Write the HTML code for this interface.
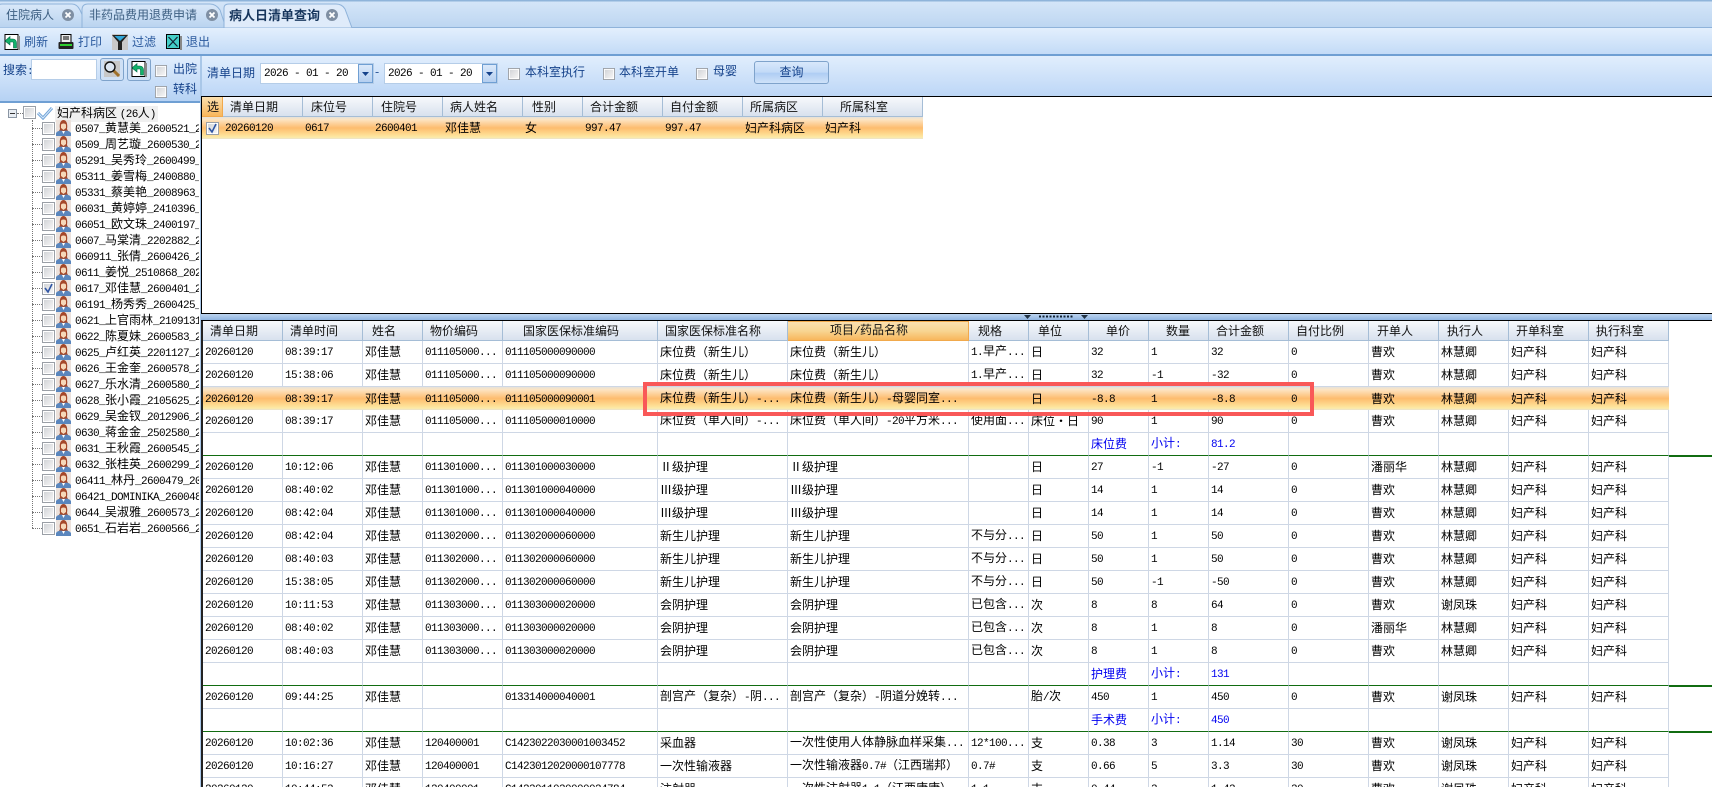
<!DOCTYPE html>
<html lang="zh-CN"><head><meta charset="utf-8"><title>病人日清单查询</title>
<style>
html,body{margin:0;padding:0;width:1712px;height:787px;overflow:hidden;background:#fff}
body{position:relative;font:12px/14px "WenQuanYi Zen Hei","Noto Sans CJK SC",sans-serif;color:#000}
i,.m,td.m{font:normal 11px/14px "Liberation Mono",monospace;letter-spacing:-.6px}
.a{position:absolute;white-space:nowrap}
.t{position:absolute;white-space:nowrap;line-height:14px}
.blue{color:#2b5a9e}.navy{color:#15428b}
table{position:absolute;border-collapse:separate;border-spacing:0;table-layout:fixed}
th,td{box-sizing:border-box;overflow:hidden;white-space:nowrap;padding:0 0 0 2px;font-weight:normal;text-align:left;border-right:1px solid #ced7e5;border-bottom:1px solid #ced7e5}
th{height:20px;background:linear-gradient(#f7f9fc,#e9eef5 45%,#d8e1ee);border-right:1px solid #a5bdd6;border-bottom:1px solid #a5bdd6;color:#111}
td{height:23px}
td.m{padding-top:2px}
#main td:nth-child(1),#main td:nth-child(2),#main td:nth-child(4),#main td:nth-child(5),#main td:nth-child(10),#main td:nth-child(11),#main td:nth-child(12),#main td:nth-child(13){font:normal 11px/14px "Liberation Mono",monospace;letter-spacing:-.6px;padding-top:2px}
#main tr.b td{font:12px/14px "WenQuanYi Zen Hei","Noto Sans CJK SC",sans-serif;letter-spacing:0;padding-top:0;color:#0000f0}
#main tr.b i{color:#0000f0}
th.on{background:linear-gradient(#fae0b0,#f8d592 50%,#f8b65c);border:1px solid #f1a94c;border-left:0}
tr.g td{border-bottom:1px solid #116c11}
tr.s td{border-right:0;border-bottom:0;background:linear-gradient(#e6e2da 0,#fde4c2 12%,#fdbc6e 50%,#fed488 72%,#fdeaa6 92%,#e9e3cf 100%)}
#top td{height:22px}
.row{position:absolute;left:0;width:199px;height:16px;overflow:hidden}
.row svg{position:absolute}
.row span{position:absolute;left:75px;top:1px;white-space:nowrap}
.dv{position:absolute;left:32px;width:0;border-left:1px dotted #777}
.dh{position:absolute;left:32px;top:8px;width:10px;height:0;border-top:1px dotted #777}
</style></head><body>
<svg width="0" height="0" style="position:absolute"><defs>
<linearGradient id="cg" x1="0" y1="0" x2="1" y2="1"><stop offset="0" stop-color="#d2d4d8"/><stop offset="1" stop-color="#f6f6f6"/></linearGradient>
<symbol id="cb" viewBox="0 0 13 13"><rect x=".5" y=".5" width="12" height="12" fill="#fff" stroke="#9a9fa6"/><rect x="2" y="2" width="9" height="9" fill="url(#cg)"/></symbol>
<symbol id="u" viewBox="0 0 15 16"><rect x="0" y="0" width="15" height="12" fill="#ece2dc"/><path d="M4 9C3 3 5 0 7.500 0S12 3 11 9L12 11H3Z" fill="#a5482a"/><path d="M5 5C5 3 10 3 10 5V8L7.500 10 5 8Z" fill="#f6d7b8"/><path d="M0 16V13C1 11 5 10 7.500 11 10 10 14 11 15 13V16Z" fill="#5a86bd"/><path d="M6 11H9L7.500 14Z" fill="#fff"/></symbol>
<symbol id="x" viewBox="0 0 12 12"><circle cx="6" cy="6" r="6" fill="#7f8fa3"/><path d="M3.500 3.500 8.500 8.500M8.500 3.500 3.500 8.500" stroke="#fff" stroke-width="1.800"/></symbol>
<symbol id="rf" viewBox="0 0 16 16"><rect x="1" y="0.500" width="13" height="15" fill="#fff" stroke="#000"/><rect x="14" y="2" width="2" height="14" fill="#888"/><path d="M1 7 6 2.500V5H9C11.500 5 12.500 7 12.500 9V14H9.500V9C9.500 8.300 9 8 8.500 8H6V11Z" fill="#12b26a" stroke="#064" stroke-width=".6"/></symbol>
</defs></svg>

<!-- tab strip -->
<div class="a" style="left:0;top:0;width:1712px;height:28px;background:linear-gradient(#8fb4da 0,#8fb4da 1px,#d4e5f8 2px,#bdd6f1 100%);border-bottom:1px solid #8fb3da;box-sizing:border-box"></div>
<svg class="a" style="left:0;top:0" width="370" height="29">
<path d="M-2 28V8Q-2 4 2 4H72Q77 4 80 10L88 28Z" fill="url(#tb)" stroke="#8fb3da"/>
<path d="M82 28 82 10Q82 4 88 4H210Q216 4 220 10L226 28Z" fill="url(#tb)" stroke="#8fb3da"/>
<path d="M224 28V8Q224 4 229 4H336Q342 4 345 9L352 28Z" fill="#dfebfa" stroke="#8fb3da"/>
<defs><linearGradient id="tb" x1="0" x2="0" y1="0" y2="1"><stop offset="0" stop-color="#d9e8f9"/><stop offset="1" stop-color="#b9d3ef"/></linearGradient></defs>
<use href="#x" x="62" y="9" width="12" height="12"/><use href="#x" x="206" y="9" width="12" height="12"/><use href="#x" x="326" y="9" width="12" height="12"/>
</svg>
<div class="t" style="left:6px;top:8px;color:#3d5f82">住院病人</div>
<div class="t" style="left:89px;top:8px;color:#3d5f82">非药品费用退费申请</div>
<div class="t" style="left:229px;top:8px;font-weight:bold;font-size:13px;color:#17365d">病人日清单查询</div>

<!-- toolbar -->
<div class="a" style="left:0;top:28px;width:1712px;height:28px;background:linear-gradient(#e3effd,#c3dbf7);border-bottom:2px solid #6f9fd3;box-sizing:border-box"></div>
<svg class="a" style="left:4px;top:34px" width="16" height="16"><use href="#rf" width="16" height="16"/></svg>
<div class="t blue" style="left:24px;top:35px">刷新</div>
<svg class="a" style="left:58px;top:34px" width="16" height="16"><rect x="3" y="0.500" width="10" height="8" fill="#eee" stroke="#000"/><path d="M5 3H11M5 5H11" stroke="#000"/><rect x="0.500" y="8" width="15" height="7" rx="1" fill="#222"/><rect x="2" y="10" width="12" height="2" fill="#2fcf2f"/></svg>
<div class="t blue" style="left:78px;top:35px">打印</div>
<svg class="a" style="left:112px;top:34px" width="16" height="16"><rect width="16" height="16" fill="#c8c8c8"/><path d="M0 1H16L10 8V16H6V8Z" fill="#222"/><path d="M2.500 2H13.500L8 7Z" fill="#2fa6d8"/></svg>
<div class="t blue" style="left:132px;top:35px">过滤</div>
<svg class="a" style="left:166px;top:34px" width="16" height="16"><rect x="0.500" y="0.500" width="13" height="14" fill="#44cfc8" stroke="#000"/><path d="M2.500 3 11.500 12.500M11.500 3 2.500 12.500" stroke="#123" stroke-width="1.200"/><rect x="14" y="2" width="2" height="14" fill="#888"/></svg>
<div class="t blue" style="left:186px;top:35px">退出</div>

<!-- left search panel -->
<div class="a" style="left:0;top:56px;width:200px;height:47px;background:linear-gradient(#e1eefd,#b6d2f4);border-bottom:2px solid #6f9fd3;box-sizing:border-box"></div>
<div class="t navy" style="left:3px;top:63px">搜索<i>:</i></div>
<div class="a" style="left:31px;top:59px;width:66px;height:21px;background:#fff;border:1px solid #b5cde8;box-sizing:border-box"></div>
<div class="a" style="left:100px;top:58px;width:24px;height:23px;border:1px solid #7fa3cb;border-radius:3px;background:#cfe0f5;box-sizing:border-box"></div>
<svg class="a" style="left:104px;top:61px" width="16" height="17"><rect width="16" height="16" fill="#c8c8c8"/><path d="M9.500 9.500 15 15" stroke="#a0702a" stroke-width="3"/><circle cx="6" cy="6" r="5" fill="#dce6f2" stroke="#111" stroke-width="1.400"/></svg>
<div class="a" style="left:127px;top:58px;width:24px;height:23px;border:1px solid #7fa3cb;border-radius:3px;background:#cfe0f5;box-sizing:border-box"></div>
<svg class="a" style="left:131px;top:61px" width="16" height="16"><use href="#rf" width="16" height="16"/></svg>
<svg class="a" style="left:155px;top:65px" width="12" height="12"><use href="#cb" width="12" height="12"/></svg>
<div class="t navy" style="left:173px;top:62px">出院</div>
<svg class="a" style="left:155px;top:86px" width="12" height="12"><use href="#cb" width="12" height="12"/></svg>
<div class="t navy" style="left:173px;top:82px">转科</div>

<!-- tree -->
<div class="a" style="left:0;top:103px;width:200px;height:684px;overflow:hidden;background:#fff">
<div class="a" style="left:8px;top:6px;width:9px;height:9px;background:#e8edf3;border:1px solid #8a95a3;box-sizing:border-box"></div>
<div class="a" style="left:10px;top:10px;width:5px;height:1px;background:#333"></div>
<div class="a" style="left:17px;top:10px;width:6px;border-top:1px dotted #777"></div>
<svg class="a" style="left:23px;top:3px" width="13" height="13"><use href="#cb" width="13" height="13"/></svg>
<svg class="a" style="left:37px;top:3px" width="16" height="14"><path d="M1 7 6 12 15 2" fill="none" stroke="#6fa3d8" stroke-width="3"/><path d="M1 7 6 12 15 2" fill="none" stroke="#d9e8f8" stroke-width="1"/></svg>
<div class="t" style="left:55px;top:3px;background:#f0f0f0;padding:0 2px">妇产科病区 <i>(26</i>人<i>)</i></div>
<div class="dv" style="top:17px;height:408px"></div>
<div class="row" style="top:17px"><s class="dh"></s><svg style="left:42px;top:2px" width="13" height="13"><use href="#cb" width="13" height="13"/></svg><svg style="left:56px;top:0" width="15" height="16"><use href="#u" width="15" height="16"/></svg><span><i>0507_</i>黄慧美<i>_2600521_2026</i></span></div>
<div class="row" style="top:33px"><s class="dh"></s><svg style="left:42px;top:2px" width="13" height="13"><use href="#cb" width="13" height="13"/></svg><svg style="left:56px;top:0" width="15" height="16"><use href="#u" width="15" height="16"/></svg><span><i>0509_</i>周艺璇<i>_2600530_2026</i></span></div>
<div class="row" style="top:49px"><s class="dh"></s><svg style="left:42px;top:2px" width="13" height="13"><use href="#cb" width="13" height="13"/></svg><svg style="left:56px;top:0" width="15" height="16"><use href="#u" width="15" height="16"/></svg><span><i>05291_</i>吴秀玲<i>_2600499_2026</i></span></div>
<div class="row" style="top:65px"><s class="dh"></s><svg style="left:42px;top:2px" width="13" height="13"><use href="#cb" width="13" height="13"/></svg><svg style="left:56px;top:0" width="15" height="16"><use href="#u" width="15" height="16"/></svg><span><i>05311_</i>姜雪梅<i>_2400880_2026</i></span></div>
<div class="row" style="top:81px"><s class="dh"></s><svg style="left:42px;top:2px" width="13" height="13"><use href="#cb" width="13" height="13"/></svg><svg style="left:56px;top:0" width="15" height="16"><use href="#u" width="15" height="16"/></svg><span><i>05331_</i>蔡美艳<i>_2008963_2026</i></span></div>
<div class="row" style="top:97px"><s class="dh"></s><svg style="left:42px;top:2px" width="13" height="13"><use href="#cb" width="13" height="13"/></svg><svg style="left:56px;top:0" width="15" height="16"><use href="#u" width="15" height="16"/></svg><span><i>06031_</i>黄婷婷<i>_2410396_2026</i></span></div>
<div class="row" style="top:113px"><s class="dh"></s><svg style="left:42px;top:2px" width="13" height="13"><use href="#cb" width="13" height="13"/></svg><svg style="left:56px;top:0" width="15" height="16"><use href="#u" width="15" height="16"/></svg><span><i>06051_</i>欧文珠<i>_2400197_2026</i></span></div>
<div class="row" style="top:129px"><s class="dh"></s><svg style="left:42px;top:2px" width="13" height="13"><use href="#cb" width="13" height="13"/></svg><svg style="left:56px;top:0" width="15" height="16"><use href="#u" width="15" height="16"/></svg><span><i>0607_</i>马棠清<i>_2202882_2026</i></span></div>
<div class="row" style="top:145px"><s class="dh"></s><svg style="left:42px;top:2px" width="13" height="13"><use href="#cb" width="13" height="13"/></svg><svg style="left:56px;top:0" width="15" height="16"><use href="#u" width="15" height="16"/></svg><span><i>060911_</i>张倩<i>_2600426_2026</i></span></div>
<div class="row" style="top:161px"><s class="dh"></s><svg style="left:42px;top:2px" width="13" height="13"><use href="#cb" width="13" height="13"/></svg><svg style="left:56px;top:0" width="15" height="16"><use href="#u" width="15" height="16"/></svg><span><i>0611_</i>姜悦<i>_2510868_2026</i></span></div>
<div class="row" style="top:177px"><s class="dh"></s><svg style="left:42px;top:2px" width="13" height="13"><use href="#cb" width="13" height="13"/><path d="M3 6 6 10 10 2" fill="none" stroke="#2f55a4" stroke-width="1.600"/></svg><svg style="left:56px;top:0" width="15" height="16"><use href="#u" width="15" height="16"/></svg><span><i>0617_</i>邓佳慧<i>_2600401_2026</i></span></div>
<div class="row" style="top:193px"><s class="dh"></s><svg style="left:42px;top:2px" width="13" height="13"><use href="#cb" width="13" height="13"/></svg><svg style="left:56px;top:0" width="15" height="16"><use href="#u" width="15" height="16"/></svg><span><i>06191_</i>杨秀秀<i>_2600425_2026</i></span></div>
<div class="row" style="top:209px"><s class="dh"></s><svg style="left:42px;top:2px" width="13" height="13"><use href="#cb" width="13" height="13"/></svg><svg style="left:56px;top:0" width="15" height="16"><use href="#u" width="15" height="16"/></svg><span><i>0621_</i>上官雨林<i>_2109131_2026</i></span></div>
<div class="row" style="top:225px"><s class="dh"></s><svg style="left:42px;top:2px" width="13" height="13"><use href="#cb" width="13" height="13"/></svg><svg style="left:56px;top:0" width="15" height="16"><use href="#u" width="15" height="16"/></svg><span><i>0622_</i>陈夏妹<i>_2600583_2026</i></span></div>
<div class="row" style="top:241px"><s class="dh"></s><svg style="left:42px;top:2px" width="13" height="13"><use href="#cb" width="13" height="13"/></svg><svg style="left:56px;top:0" width="15" height="16"><use href="#u" width="15" height="16"/></svg><span><i>0625_</i>卢红英<i>_2201127_2026</i></span></div>
<div class="row" style="top:257px"><s class="dh"></s><svg style="left:42px;top:2px" width="13" height="13"><use href="#cb" width="13" height="13"/></svg><svg style="left:56px;top:0" width="15" height="16"><use href="#u" width="15" height="16"/></svg><span><i>0626_</i>王金奎<i>_2600578_2026</i></span></div>
<div class="row" style="top:273px"><s class="dh"></s><svg style="left:42px;top:2px" width="13" height="13"><use href="#cb" width="13" height="13"/></svg><svg style="left:56px;top:0" width="15" height="16"><use href="#u" width="15" height="16"/></svg><span><i>0627_</i>乐水清<i>_2600580_2026</i></span></div>
<div class="row" style="top:289px"><s class="dh"></s><svg style="left:42px;top:2px" width="13" height="13"><use href="#cb" width="13" height="13"/></svg><svg style="left:56px;top:0" width="15" height="16"><use href="#u" width="15" height="16"/></svg><span><i>0628_</i>张小霞<i>_2105625_2026</i></span></div>
<div class="row" style="top:305px"><s class="dh"></s><svg style="left:42px;top:2px" width="13" height="13"><use href="#cb" width="13" height="13"/></svg><svg style="left:56px;top:0" width="15" height="16"><use href="#u" width="15" height="16"/></svg><span><i>0629_</i>吴金钗<i>_2012906_2026</i></span></div>
<div class="row" style="top:321px"><s class="dh"></s><svg style="left:42px;top:2px" width="13" height="13"><use href="#cb" width="13" height="13"/></svg><svg style="left:56px;top:0" width="15" height="16"><use href="#u" width="15" height="16"/></svg><span><i>0630_</i>蒋金金<i>_2502580_2026</i></span></div>
<div class="row" style="top:337px"><s class="dh"></s><svg style="left:42px;top:2px" width="13" height="13"><use href="#cb" width="13" height="13"/></svg><svg style="left:56px;top:0" width="15" height="16"><use href="#u" width="15" height="16"/></svg><span><i>0631_</i>王秋霞<i>_2600545_2026</i></span></div>
<div class="row" style="top:353px"><s class="dh"></s><svg style="left:42px;top:2px" width="13" height="13"><use href="#cb" width="13" height="13"/></svg><svg style="left:56px;top:0" width="15" height="16"><use href="#u" width="15" height="16"/></svg><span><i>0632_</i>张桂英<i>_2600299_2026</i></span></div>
<div class="row" style="top:369px"><s class="dh"></s><svg style="left:42px;top:2px" width="13" height="13"><use href="#cb" width="13" height="13"/></svg><svg style="left:56px;top:0" width="15" height="16"><use href="#u" width="15" height="16"/></svg><span><i>06411_</i>林丹<i>_2600479_2026</i></span></div>
<div class="row" style="top:385px"><s class="dh"></s><svg style="left:42px;top:2px" width="13" height="13"><use href="#cb" width="13" height="13"/></svg><svg style="left:56px;top:0" width="15" height="16"><use href="#u" width="15" height="16"/></svg><span><i>06421_DOMINIKA_2600480</i></span></div>
<div class="row" style="top:401px"><s class="dh"></s><svg style="left:42px;top:2px" width="13" height="13"><use href="#cb" width="13" height="13"/></svg><svg style="left:56px;top:0" width="15" height="16"><use href="#u" width="15" height="16"/></svg><span><i>0644_</i>吴淑雅<i>_2600573_2026</i></span></div>
<div class="row" style="top:417px"><s class="dh"></s><svg style="left:42px;top:2px" width="13" height="13"><use href="#cb" width="13" height="13"/></svg><svg style="left:56px;top:0" width="15" height="16"><use href="#u" width="15" height="16"/></svg><span><i>0651_</i>石岩岩<i>_2600566_2026</i></span></div>
</div>
<div class="a" style="left:200px;top:56px;width:2px;height:731px;background:#a9c7e8"></div>

<!-- filter bar -->
<div class="a" style="left:202px;top:56px;width:1510px;height:41px;background:linear-gradient(#e1eefd,#bcd6f6)"></div>
<div class="t navy" style="left:207px;top:66px">清单日期</div>
<div class="a m" style="left:260px;top:63px;width:114px;height:21px;background:#fff;border:1px solid #b5cde8;box-sizing:border-box;padding:3px 0 0 3px;white-space:pre">2026 - 01 - 20</div>
<div class="a" style="left:358px;top:64px;width:15px;height:19px;background:linear-gradient(#dbe9fa,#b5cff0);border:1px solid #6f9fd3;box-sizing:border-box"></div>
<svg class="a" style="left:362px;top:72px" width="7" height="4"><path d="M0 0H7L3.500 4Z" fill="#15428b"/></svg>
<div class="t navy" style="left:375px;top:65px">-</div>
<div class="a m" style="left:384px;top:63px;width:114px;height:21px;background:#fff;border:1px solid #b5cde8;box-sizing:border-box;padding:3px 0 0 3px;white-space:pre">2026 - 01 - 20</div>
<div class="a" style="left:482px;top:64px;width:15px;height:19px;background:linear-gradient(#dbe9fa,#b5cff0);border:1px solid #6f9fd3;box-sizing:border-box"></div>
<svg class="a" style="left:486px;top:72px" width="7" height="4"><path d="M0 0H7L3.500 4Z" fill="#15428b"/></svg>
<svg class="a" style="left:508px;top:68px" width="12" height="12"><use href="#cb" width="12" height="12"/></svg>
<div class="t navy" style="left:525px;top:65px">本科室执行</div>
<svg class="a" style="left:603px;top:68px" width="12" height="12"><use href="#cb" width="12" height="12"/></svg>
<div class="t navy" style="left:619px;top:65px">本科室开单</div>
<svg class="a" style="left:696px;top:68px" width="12" height="12"><use href="#cb" width="12" height="12"/></svg>
<div class="t navy" style="left:713px;top:64px">母婴</div>
<div class="a navy" style="left:754px;top:61px;width:75px;height:23px;box-sizing:border-box;border:1px solid #7fa3cb;border-radius:3px;background:linear-gradient(#d8e8fb,#c2daf7 50%,#aecdf3 52%,#cfe2f9);text-align:center;line-height:20px">查询</div>

<!-- top grid -->
<div class="a" style="left:201px;top:96px;width:1511px;height:218px;background:#fff;border-top:1px solid #000;border-bottom:1px solid #000;border-left:1px solid #000;box-sizing:border-box"></div>
<table id="top" style="left:202px;top:97px;width:721px">
<colgroup><col style="width:21px"><col style="width:80px"><col style="width:70px"><col style="width:70px"><col style="width:80px"><col style="width:60px"><col style="width:80px"><col style="width:80px"><col style="width:80px"><col style="width:100px"></colgroup>
<tr><th style="padding-left:5px;background:linear-gradient(#fae0b0,#f8b65c);border-color:#f1a94c">选</th><th style="padding-left:7px">清单日期</th><th style="padding-left:8px">床位号</th><th style="padding-left:8px">住院号</th><th style="padding-left:7px">病人姓名</th><th style="padding-left:9px">性别</th><th style="padding-left:7px">合计金额</th><th style="padding-left:7px">自付金额</th><th style="padding-left:7px">所属病区</th><th style="padding-left:17px">所属科室</th></tr>
<tr class="s"><td></td><td class="m">20260120</td><td class="m">0617</td><td class="m">2600401</td><td>邓佳慧</td><td>女</td><td class="m">997.47</td><td class="m">997.47</td><td>妇产科病区</td><td>妇产科</td></tr>
</table>
<svg class="a" style="left:206px;top:122px" width="13" height="13"><use href="#cb" width="13" height="13"/><path d="M3 6 6 10 10 2" fill="none" stroke="#2f55a4" stroke-width="1.600"/></svg>

<!-- splitter -->
<div class="a" style="left:201px;top:314px;width:1511px;height:7px;background:linear-gradient(#bcd4ef,#8fb4e0);border-bottom:1px solid #000;box-sizing:border-box"></div>
<svg class="a" style="left:1024px;top:315px" width="66" height="5"><path d="M0 0H7L3.500 4Z M57 0H64L60.500 4Z" fill="#234" /><path d="M15 1.500H50" stroke="#123" stroke-width="2" stroke-dasharray="2 1.500"/></svg>
<div class="a" style="left:201px;top:321px;width:2px;height:466px;background:#222"></div>

<!-- green extensions -->
<div class="a" style="left:1668px;top:455px;width:44px;height:2px;background:#116c11"></div>
<div class="a" style="left:1668px;top:685px;width:44px;height:2px;background:#116c11"></div>
<div class="a" style="left:1668px;top:731px;width:44px;height:2px;background:#116c11"></div>

<!-- main grid -->
<table id="main" style="left:203px;top:321px;width:1466px">
<colgroup><col style="width:80px"><col style="width:80px"><col style="width:60px"><col style="width:80px"><col style="width:155px"><col style="width:130px"><col style="width:181px"><col style="width:60px"><col style="width:60px"><col style="width:60px"><col style="width:60px"><col style="width:80px"><col style="width:80px"><col style="width:70px"><col style="width:70px"><col style="width:80px"><col style="width:80px"></colgroup>
<tr><th style="padding-left:7px">清单日期</th><th style="padding-left:7px">清单时间</th><th style="padding-left:9px">姓名</th><th style="padding-left:7px">物价编码</th><th style="padding-left:20px">国家医保标准编码</th><th style="padding-left:7px">国家医保标准名称</th><th class="on" style="padding-left:42px">项目<i>/</i>药品名称</th><th style="padding-left:9px">规格</th><th style="padding-left:9px">单位</th><th style="padding-left:17px">单价</th><th style="padding-left:17px">数量</th><th style="padding-left:7px">合计金额</th><th style="padding-left:7px">自付比例</th><th style="padding-left:8px">开单人</th><th style="padding-left:8px">执行人</th><th style="padding-left:7px">开单科室</th><th style="padding-left:7px">执行科室</th></tr>
<tr><td>20260120</td><td>08:39:17</td><td>邓佳慧</td><td>011105000...</td><td>011105000090000</td><td>床位费（新生儿）</td><td>床位费（新生儿）</td><td><i>1.</i>早产<i>...</i></td><td>日</td><td>32</td><td>1</td><td>32</td><td>0</td><td>曹欢</td><td>林慧卿</td><td>妇产科</td><td>妇产科</td></tr>
<tr><td>20260120</td><td>15:38:06</td><td>邓佳慧</td><td>011105000...</td><td>011105000090000</td><td>床位费（新生儿）</td><td>床位费（新生儿）</td><td><i>1.</i>早产<i>...</i></td><td>日</td><td>32</td><td>-1</td><td>-32</td><td>0</td><td>曹欢</td><td>林慧卿</td><td>妇产科</td><td>妇产科</td></tr>
<tr class="s"><td>20260120</td><td>08:39:17</td><td>邓佳慧</td><td>011105000...</td><td>011105000090001</td><td>床位费（新生儿）<i>-...</i></td><td>床位费（新生儿）<i>-</i>母婴同室<i>...</i></td><td></td><td>日</td><td>-8.8</td><td>1</td><td>-8.8</td><td>0</td><td>曹欢</td><td>林慧卿</td><td>妇产科</td><td>妇产科</td></tr>
<tr><td>20260120</td><td>08:39:17</td><td>邓佳慧</td><td>011105000...</td><td>011105000010000</td><td>床位费（单人间）<i>-...</i></td><td>床位费（单人间）<i>-20</i>平方米<i>...</i></td><td>使用面<i>...</i></td><td>床位・日</td><td>90</td><td>1</td><td>90</td><td>0</td><td>曹欢</td><td>林慧卿</td><td>妇产科</td><td>妇产科</td></tr>
<tr class="g b"><td></td><td></td><td></td><td></td><td></td><td></td><td></td><td></td><td></td><td>床位费</td><td>小计<i>:</i></td><td><i>81.2</i></td><td></td><td></td><td></td><td></td><td></td></tr>
<tr><td>20260120</td><td>10:12:06</td><td>邓佳慧</td><td>011301000...</td><td>011301000030000</td><td>Ⅱ级护理</td><td>Ⅱ级护理</td><td></td><td>日</td><td>27</td><td>-1</td><td>-27</td><td>0</td><td>潘丽华</td><td>林慧卿</td><td>妇产科</td><td>妇产科</td></tr>
<tr><td>20260120</td><td>08:40:02</td><td>邓佳慧</td><td>011301000...</td><td>011301000040000</td><td>Ⅲ级护理</td><td>Ⅲ级护理</td><td></td><td>日</td><td>14</td><td>1</td><td>14</td><td>0</td><td>曹欢</td><td>林慧卿</td><td>妇产科</td><td>妇产科</td></tr>
<tr><td>20260120</td><td>08:42:04</td><td>邓佳慧</td><td>011301000...</td><td>011301000040000</td><td>Ⅲ级护理</td><td>Ⅲ级护理</td><td></td><td>日</td><td>14</td><td>1</td><td>14</td><td>0</td><td>曹欢</td><td>林慧卿</td><td>妇产科</td><td>妇产科</td></tr>
<tr><td>20260120</td><td>08:42:04</td><td>邓佳慧</td><td>011302000...</td><td>011302000060000</td><td>新生儿护理</td><td>新生儿护理</td><td>不与分<i>...</i></td><td>日</td><td>50</td><td>1</td><td>50</td><td>0</td><td>曹欢</td><td>林慧卿</td><td>妇产科</td><td>妇产科</td></tr>
<tr><td>20260120</td><td>08:40:03</td><td>邓佳慧</td><td>011302000...</td><td>011302000060000</td><td>新生儿护理</td><td>新生儿护理</td><td>不与分<i>...</i></td><td>日</td><td>50</td><td>1</td><td>50</td><td>0</td><td>曹欢</td><td>林慧卿</td><td>妇产科</td><td>妇产科</td></tr>
<tr><td>20260120</td><td>15:38:05</td><td>邓佳慧</td><td>011302000...</td><td>011302000060000</td><td>新生儿护理</td><td>新生儿护理</td><td>不与分<i>...</i></td><td>日</td><td>50</td><td>-1</td><td>-50</td><td>0</td><td>曹欢</td><td>林慧卿</td><td>妇产科</td><td>妇产科</td></tr>
<tr><td>20260120</td><td>10:11:53</td><td>邓佳慧</td><td>011303000...</td><td>011303000020000</td><td>会阴护理</td><td>会阴护理</td><td>已包含<i>...</i></td><td>次</td><td>8</td><td>8</td><td>64</td><td>0</td><td>曹欢</td><td>谢凤珠</td><td>妇产科</td><td>妇产科</td></tr>
<tr><td>20260120</td><td>08:40:02</td><td>邓佳慧</td><td>011303000...</td><td>011303000020000</td><td>会阴护理</td><td>会阴护理</td><td>已包含<i>...</i></td><td>次</td><td>8</td><td>1</td><td>8</td><td>0</td><td>潘丽华</td><td>林慧卿</td><td>妇产科</td><td>妇产科</td></tr>
<tr><td>20260120</td><td>08:40:03</td><td>邓佳慧</td><td>011303000...</td><td>011303000020000</td><td>会阴护理</td><td>会阴护理</td><td>已包含<i>...</i></td><td>次</td><td>8</td><td>1</td><td>8</td><td>0</td><td>曹欢</td><td>林慧卿</td><td>妇产科</td><td>妇产科</td></tr>
<tr class="g b"><td></td><td></td><td></td><td></td><td></td><td></td><td></td><td></td><td></td><td>护理费</td><td>小计<i>:</i></td><td><i>131</i></td><td></td><td></td><td></td><td></td><td></td></tr>
<tr><td>20260120</td><td>09:44:25</td><td>邓佳慧</td><td></td><td>013314000040001</td><td>剖宫产（复杂）<i>-</i>阴<i>...</i></td><td>剖宫产（复杂）<i>-</i>阴道分娩转<i>...</i></td><td></td><td>胎<i>/</i>次</td><td>450</td><td>1</td><td>450</td><td>0</td><td>曹欢</td><td>谢凤珠</td><td>妇产科</td><td>妇产科</td></tr>
<tr class="g b"><td></td><td></td><td></td><td></td><td></td><td></td><td></td><td></td><td></td><td>手术费</td><td>小计<i>:</i></td><td><i>450</i></td><td></td><td></td><td></td><td></td><td></td></tr>
<tr><td>20260120</td><td>10:02:36</td><td>邓佳慧</td><td>120400001</td><td>C1423022030001003452</td><td>采血器</td><td>一次性使用人体静脉血样采集<i>...</i></td><td><i>12*100...</i></td><td>支</td><td>0.38</td><td>3</td><td>1.14</td><td>30</td><td>曹欢</td><td>谢凤珠</td><td>妇产科</td><td>妇产科</td></tr>
<tr><td>20260120</td><td>10:16:27</td><td>邓佳慧</td><td>120400001</td><td>C1423012020000107778</td><td>一次性输液器</td><td>一次性输液器<i>0.7#</i>（江西瑞邦）</td><td><i>0.7#</i></td><td>支</td><td>0.66</td><td>5</td><td>3.3</td><td>30</td><td>曹欢</td><td>谢凤珠</td><td>妇产科</td><td>妇产科</td></tr>
<tr><td>20260120</td><td>10:44:53</td><td>邓佳慧</td><td>120400001</td><td>C1423011030000024784</td><td>注射器</td><td>一次性注射器<i>1.1</i>（江西康康）<i>...</i></td><td><i>1.1</i></td><td>支</td><td>0.44</td><td>3</td><td>1.43</td><td>30</td><td>曹欢</td><td>谢凤珠</td><td>妇产科</td><td>妇产科</td></tr>
</table>

<!-- red highlight -->
<div class="a" style="left:643px;top:382px;width:671px;height:34px;border:4px solid #f95858;box-sizing:border-box"></div>
</body></html>
